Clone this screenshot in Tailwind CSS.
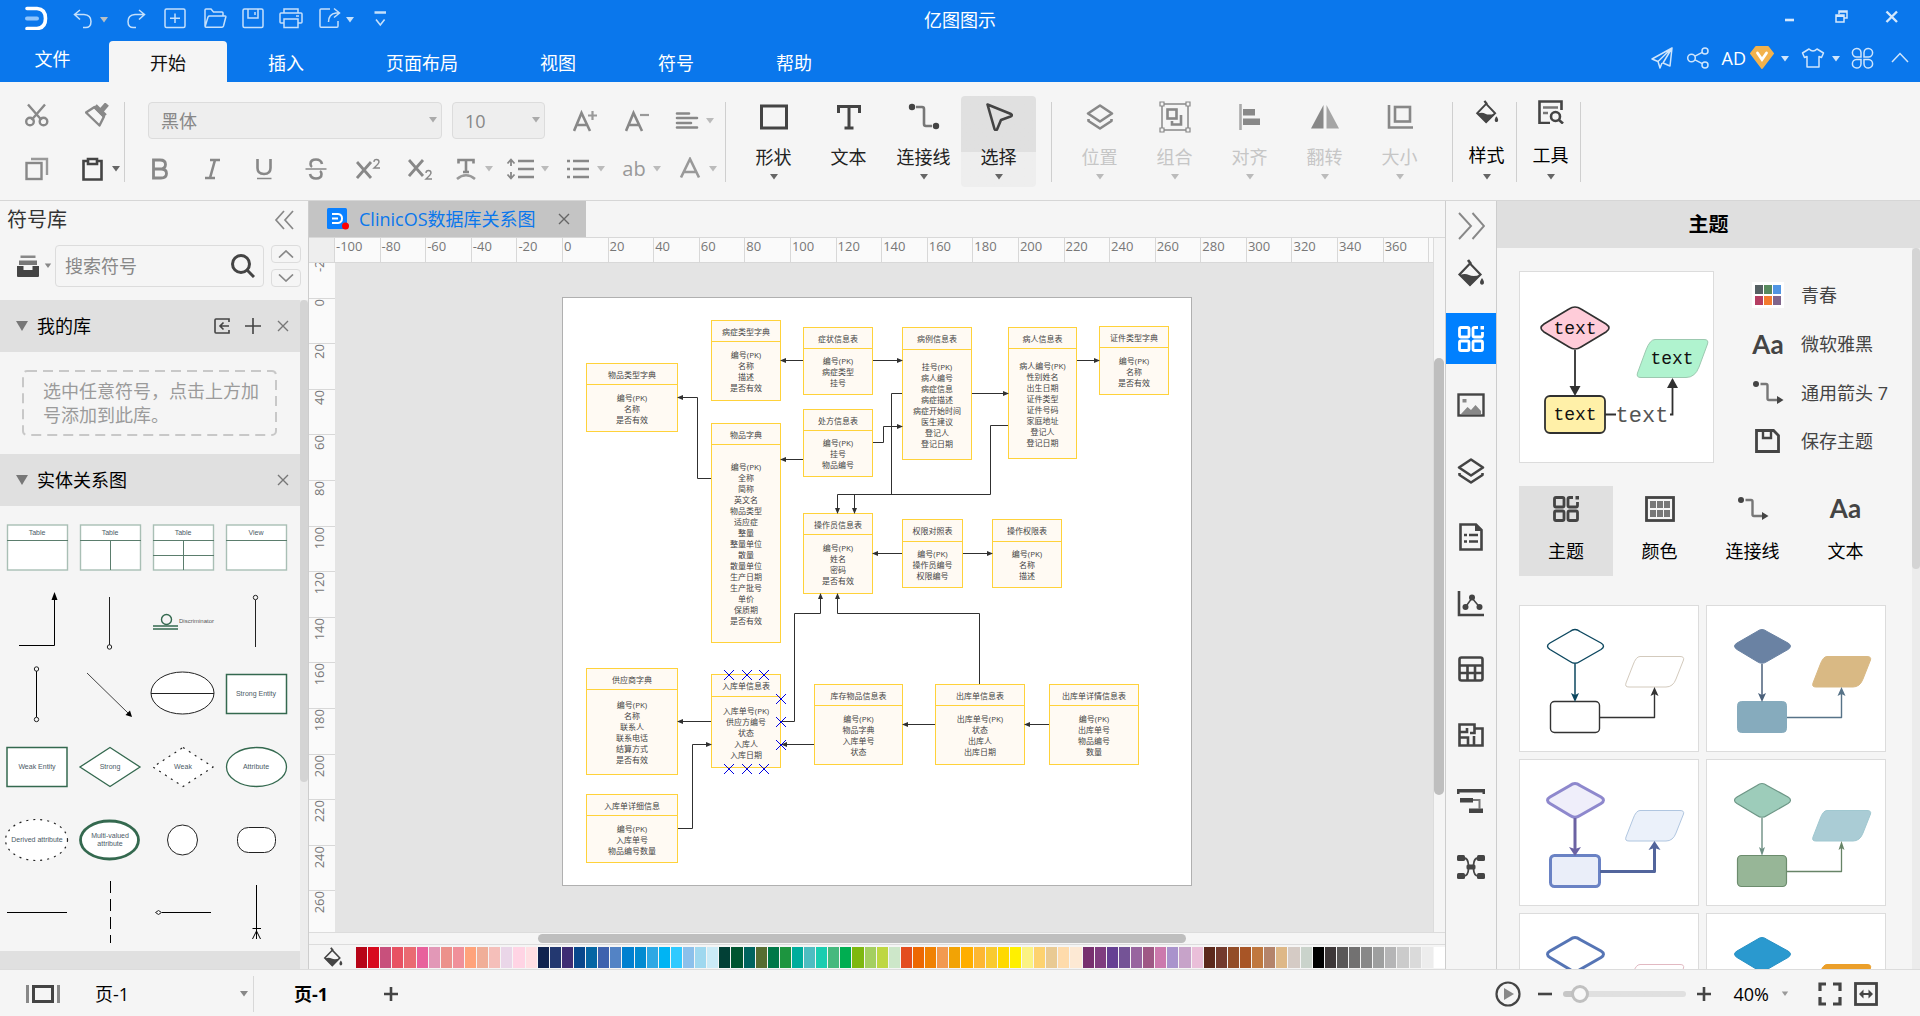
<!DOCTYPE html>
<html lang="zh-CN">
<head>
<meta charset="utf-8">
<title>亿图图示</title>
<script src="https://cdn.jsdelivr.net/npm/@tailwindcss/browser@4"></script>
</head>
<body class="h-screen flex flex-col overflow-hidden bg-[#f5f5f5] text-black text-lg leading-6 font-['Open_Sans','Noto_Sans_CJK_SC',sans-serif]">

<svg class="hidden" aria-hidden="true">
  <symbol id="caret" viewBox="0 0 10 6"><path d="M1 0H9L5 5.5Z" fill="currentColor"/></symbol>
  <symbol id="bucket" viewBox="0 0 28 28"><path d="M11 1 14 5" stroke="currentColor" stroke-width="2.6" fill="none"/><path d="M13 4.500 2.500 15.500 13 26 23.500 15.500Z" fill="none" stroke="currentColor" stroke-width="2.200"/><path d="M3 16Q8 14 12 16T23 16L13 26.500Z" fill="currentColor"/><path d="M25 19Q28 23 26.500 25Q25 26.500 23.500 25Q22 23 25 19Z" fill="currentColor"/></symbol>
  <symbol id="theme" viewBox="0 0 26 26"><g fill="none" stroke="currentColor" stroke-width="2.800"><rect x="1.500" y="1.500" width="9.500" height="9.500" rx="1.500"/><rect x="1.500" y="15" width="9.500" height="9.500" rx="1.500"/><rect x="15" y="15" width="9.500" height="9.500" rx="1.500"/><path d="M20 1.500H16.500Q15 1.500 15 3V9.500Q15 11 16.500 11H23Q24.500 11 24.500 9.500V6"/></g><rect x="22.500" y="0" width="3.500" height="3.500" fill="currentColor"/></symbol>
  <symbol id="layers" viewBox="0 0 28 28"><path d="M14 2.500 26 10.500 14 18.500 2 10.500Z" fill="none" stroke="currentColor" stroke-width="2.600" stroke-linejoin="round"/><path d="M2.500 16V18L14 25.500 25.500 18V16" fill="none" stroke="currentColor" stroke-width="2.600" stroke-linejoin="round"/></symbol>
  <symbol id="link" viewBox="0 0 32 26"><circle cx="4" cy="4" r="3" fill="currentColor"/><path d="M8.500 4H14Q15.500 4 15.500 5.500V18.500Q15.500 20 17 20H25" fill="none" stroke="#777" stroke-width="2.400"/><path d="M25 16 31.500 20 25 24Z" fill="currentColor"/></symbol>
  <symbol id="cross" viewBox="0 0 12 12"><path d="M1 1 11 11M11 1 1 11" fill="none" stroke="currentColor" stroke-width="1.400"/></symbol>
  <symbol id="plus" viewBox="0 0 16 16"><path d="M8 1V15M1 8H15" fill="none" stroke="currentColor" stroke-width="2.600"/></symbol>
</svg>

<!-- Title bar and tabs -->
<header class="bg-[#0a77ec] text-white shrink-0 h-[82px] flex flex-col relative">
  <div class="h-[41px] flex justify-between">
    <div class="flex items-start pt-[6px] pl-6 text-[#c5e0fb]">
      <svg class="w-6 h-6 mr-6" viewBox="0 0 24 24" fill="none"><path d="M3 2.500H13Q21.500 3 21.500 12.500T13 22.500H3" stroke="#fff" stroke-width="3.600" stroke-linecap="round"/><path d="M3 12.500H13" stroke="#8fc4fb" stroke-width="4" stroke-linecap="round"/></svg>
      <button class="w-6 h-6" aria-label="撤销"><svg class="w-6 h-6" viewBox="0 0 24 24" fill="none" stroke="currentColor" stroke-width="1.500"><path d="M8 4 2.500 8.500 8 13.500M3 8.500H12Q19 9 19 15.500T13 21.500H11"/></svg></button>
      <svg class="w-2.5 h-1.5 ml-[3px] mr-4 mt-[11px] text-[#b9c0c4]"><use href="#caret"/></svg>
      <button class="w-6 h-6 mr-[14px]" aria-label="重做"><svg class="w-6 h-6" viewBox="0 0 24 24" fill="none" stroke="currentColor" stroke-width="1.500"><path d="M14 4 19.500 8.500 14 13.500M19 8.500H10Q3 9 3 15.500T9 21.500H11"/></svg></button>
      <button class="w-6 h-6 mr-4" aria-label="新建"><svg class="w-6 h-6" viewBox="0 0 24 24" fill="none" stroke="currentColor" stroke-width="1.500"><rect x="2" y="3" width="20" height="18.500" rx="1.500"/><path d="M12 7.500V17M7 12.300H17"/></svg></button>
      <button class="w-6 h-6 mr-[14px]" aria-label="打开"><svg class="w-6 h-6" viewBox="0 0 24 24" fill="none" stroke="currentColor" stroke-width="1.500"><path d="M2 20V4Q2 3 3 3H8L10.500 6H19Q20 6 20 7V10M2 21 5 11Q5.500 10 6.500 10H22Q23 10 22.800 11L20.500 20Q20 21.300 19 21.300H3Q2 21.300 2 20"/></svg></button>
      <button class="w-6 h-6 mr-[14px]" aria-label="保存"><svg class="w-6 h-6" viewBox="0 0 24 24" fill="none" stroke="currentColor" stroke-width="1.500"><rect x="2" y="3" width="20" height="18.500" rx="1.500"/><path d="M7 3V12H17V3M14 6V9"/></svg></button>
      <button class="w-6 h-6 mr-[14px]" aria-label="打印"><svg class="w-6 h-6" viewBox="0 0 24 24" fill="none" stroke="currentColor" stroke-width="1.500"><path d="M5 7V3H19V7M5 17H2Q1 17 1 16V8Q1 7 2 7H22Q23 7 23 8V16Q23 17 22 17H19M5 13H19V21.500H5ZM17 10H20"/></svg></button>
      <button class="w-6 h-6" aria-label="导出"><svg class="w-6 h-6" viewBox="0 0 24 24" fill="none" stroke="currentColor" stroke-width="1.500"><path d="M13 3H4Q3 3 3 4V20Q3 21.300 4 21.300H20Q21 21.300 21 20V15M17 2.500 22.500 7 17 11.500M22 7H19Q11.500 8 11.500 16"/></svg></button>
      <svg class="w-2.5 h-1.5 ml-1 mr-[14px] mt-[11px]"><use href="#caret"/></svg>
      <button class="w-6 h-6" aria-label="更多"><svg class="w-6 h-6" viewBox="0 0 24 24" fill="none" stroke="currentColor" stroke-width="1.600"><path d="M5.500 6.500H17" stroke-width="2.500"/><path d="M7 13.500 11.300 19 15.600 13.500"/></svg></button>
    </div>
    <div class="flex items-start pt-[7px] pr-[18px] gap-[31px] text-[#d5e8fc]">
      <button class="w-5 h-5" aria-label="最小化"><svg class="w-5 h-5" viewBox="0 0 20 20"><path d="M5 13H14" stroke="currentColor" stroke-width="2.600"/></svg></button>
      <button class="w-5 h-5" aria-label="还原"><svg class="w-5 h-5" viewBox="0 0 20 20" fill="none" stroke="currentColor" stroke-width="1.500"><path d="M8 7V4H16V11H13M8 5H16M5 8H13V15H5ZM5 9.200H13"/></svg></button>
      <button class="w-5 h-5" aria-label="关闭"><svg class="w-5 h-5" viewBox="0 0 20 20" fill="none" stroke="currentColor" stroke-width="2.400"><path d="M4.500 4.500 15 15M15 4.500 4.500 15"/></svg></button>
    </div>
  </div>
  <h1 class="absolute inset-x-0 top-2 text-center pointer-events-none">亿图图示</h1>
  <div class="h-[41px] flex justify-between">
    <nav class="flex items-stretch">
      <button class="w-[109px] pr-1 pb-[6px]">文件</button>
      <button class="px-[41px] pt-[3px] bg-[#f5f5f5] text-[#111] rounded-t-sm">开始</button>
      <button class="px-[41px] pt-[3px]">插入</button>
      <button class="px-[41px] pt-[3px]">页面布局</button>
      <button class="px-[41px] pt-[3px]">视图</button>
      <button class="px-[41px] pt-[3px]">符号</button>
      <button class="px-[41px] pt-[3px]">帮助</button>
    </nav>
    <div class="flex items-start pt-[5px] pr-2 text-[#cfe5fc]">
      <button class="w-6 h-6 mr-3" aria-label="发送"><svg class="w-6 h-6" viewBox="0 0 24 24" fill="none" stroke="currentColor" stroke-width="1.500" stroke-linejoin="round"><path d="M22 2 2 13 8 15.500ZM22 2 20 20 13 17ZM8 15.500 10 22 12 17"/></svg></button>
      <button class="w-6 h-6 mr-3" aria-label="分享"><svg class="w-6 h-6" viewBox="0 0 24 24" fill="none" stroke="currentColor" stroke-width="1.500"><circle cx="5.500" cy="12" r="3.800"/><circle cx="19" cy="5" r="3"/><circle cx="19" cy="19" r="3"/><path d="M9 10.200 16.300 6.400M9 13.800 16.300 17.600"/></svg></button>
      <a href="#" class="text-white flex items-start">AD
        <svg class="w-6 h-6 ml-1" viewBox="0 0 24 24"><path d="M6 1H18L23 7.500 12 22 1 7.500Z" fill="#f3b24c" stroke="#f3b24c" stroke-width="2" stroke-linejoin="round"/><path d="M7.500 7 12 13.500 16.500 7" fill="none" stroke="#fff" stroke-width="2.800" stroke-linecap="round"/></svg></a>
      <svg class="w-2.5 h-1.5 ml-[6px] mr-[11px] mt-[10px]"><use href="#caret"/></svg>
      <button class="w-6 h-6" aria-label="外观"><svg class="w-6 h-6" viewBox="0 0 24 24" fill="none" stroke="currentColor" stroke-width="1.500" stroke-linejoin="round"><path d="M8 3Q12 7 16 3L22.500 7 20.500 11.500 18 10.500V21H6V10.500L3.500 11.500 1.500 7Z"/></svg></button>
      <svg class="w-2.5 h-1.5 ml-[6px] mr-[9px] mt-[10px]"><use href="#caret"/></svg>
      <button class="w-6 h-6 mr-[14px]" aria-label="应用"><svg class="w-6 h-6" viewBox="0 0 24 24" fill="none" stroke="currentColor" stroke-width="1.500"><path d="M11 11H6.500A4.300 4.300 0 1 1 11 6.500ZM14 11H18.500A4.300 4.300 0 1 0 14 6.500ZM11 13.500H6.500A4.300 4.300 0 1 0 11 18ZM14 13.500H18.500A4.300 4.300 0 1 1 14 18Z"/></svg></button>
      <button class="w-6 h-6" aria-label="收起"><svg class="w-6 h-6" viewBox="0 0 24 24" fill="none" stroke="currentColor" stroke-width="1.500"><path d="M4 16 12 7.500 20 16"/></svg></button>
    </div>
  </div>
</header>

<!-- Ribbon -->
<section class="shrink-0 h-[119px] border-b border-[#d6d6d6] flex text-[#888]">
  <div class="w-[124px] pt-[21px] pl-[25px] flex flex-col gap-[30px]">
    <div class="flex gap-9">
      <button class="w-6 h-6" aria-label="剪切"><svg class="w-6 h-6" viewBox="0 0 24 24" fill="none" stroke="currentColor" stroke-width="2.400"><path d="M3 1.500 16.500 17M20 1.500 6.500 17"/><circle cx="5" cy="18.500" r="3.800"/><circle cx="18.500" cy="18.500" r="3.800"/></svg></button>
      <button class="w-6 h-6" aria-label="格式刷"><svg class="w-6 h-6" viewBox="0 0 24 24" fill="none" stroke="currentColor"><path d="M1 9.500 9.500 4 19 13.500 14.500 22.500Z" stroke-width="2.400" stroke-linejoin="round"/><path d="M10 3 20 13 M16 8 22 1" stroke-width="5"/></svg></button>
    </div>
    <div class="flex items-center">
      <button class="w-6 h-6 mr-8" aria-label="复制"><svg class="w-6 h-6" viewBox="0 0 24 24" fill="none" stroke="currentColor" stroke-width="2.400"><rect x="1.500" y="6" width="15" height="16"/><path d="M6 2H22V18" stroke="#999"/></svg></button>
      <button class="w-6 h-6 text-[#444]" aria-label="粘贴"><svg class="w-6 h-6" viewBox="0 0 24 24" fill="none" stroke="currentColor" stroke-width="2.600"><path d="M7 4H2.500V22.500H20.500V4H16M7 2H16V7H7Z"/></svg></button>
      <svg class="w-2.5 h-1.5 ml-[6px] text-[#666]"><use href="#caret"/></svg>
    </div>
  </div>
  <div class="w-px h-20 mt-5 bg-[#cfcfcf]"></div>

  <div class="w-[600px] pt-5 pl-[23px] flex flex-col gap-[18px]">
    <div class="flex items-center h-[37px]">
      <div class="relative w-[294px] mr-[10px]"><select aria-label="字体" class="appearance-none w-full h-[37px] px-3 bg-[#eee] border border-[#dcdcdc] rounded-sm text-[#888]"><option>黑体</option></select><svg class="absolute right-1 top-[15px] w-2.5 h-1.5 text-[#aaa]"><use href="#caret"/></svg></div>
      <div class="relative w-[93px] mr-7"><select aria-label="字号" class="appearance-none w-full h-[37px] px-3 bg-[#eee] border border-[#dcdcdc] rounded-sm text-[#888]"><option>10</option></select><svg class="absolute right-1 top-[15px] w-2.5 h-1.5 text-[#aaa]"><use href="#caret"/></svg></div>
      <button class="w-6 h-6 mr-7" aria-label="增大字号"><svg class="w-6 h-6" viewBox="0 0 24 24" fill="none" stroke="currentColor" stroke-width="2.600"><path d="M1 22 8.500 4 17 22M4 16H14"/><path d="M15 6.500H24M19.500 2V11" stroke="#999" stroke-width="2.200"/></svg></button>
      <button class="w-6 h-6 mr-[26px]" aria-label="减小字号"><svg class="w-6 h-6" viewBox="0 0 24 24" fill="none" stroke="currentColor" stroke-width="2.600"><path d="M1 22 8.500 4 17 22M4 16H14"/><path d="M15 6H24" stroke="#999" stroke-width="2.200"/></svg></button>
      <button class="flex items-center gap-[6px]" aria-label="对齐方式"><svg class="w-6 h-6" viewBox="0 0 24 24" fill="none" stroke="currentColor" stroke-width="2.600" stroke-linecap="round"><path d="M2 4.500H14M2 9H22M2 14H16M2 18.500H22"/></svg><svg class="w-2.5 h-1.5 text-[#bbb]"><use href="#caret"/></svg></button>
    </div>
    <div class="flex items-center gap-7 h-6">
      <button class="w-6 h-6" aria-label="加粗"><svg class="w-6 h-6" viewBox="0 0 24 24" fill="none" stroke="currentColor" stroke-width="2.800"><path d="M5.500 3H12Q17.500 3 17.500 7.500T12 12H5.500ZM5.500 12H13Q18.500 12 18.500 16.500T13 21H5.500Z"/></svg></button>
      <button class="w-6 h-6" aria-label="斜体"><svg class="w-6 h-6" viewBox="0 0 24 24" fill="none" stroke="currentColor" stroke-width="2.600"><path d="M10 3H20M5 21H15M15 3 10 21"/></svg></button>
      <button class="w-6 h-6" aria-label="下划线"><svg class="w-6 h-6" viewBox="0 0 24 24" fill="none" stroke="currentColor" stroke-width="2.600"><path d="M5.500 2V11Q5.500 17 12 17T18.500 11V2"/><path d="M5 21.500H19.500" stroke-width="1.500"/></svg></button>
      <button class="w-6 h-6" aria-label="删除线"><svg class="w-6 h-6" viewBox="0 0 24 24" fill="none" stroke="currentColor" stroke-width="2.600"><path d="M18 7Q17 2.500 12 2.500Q6.500 2.500 6.500 7Q6.500 9 8 10M6 17Q7 21.500 12 21.500Q17.500 21.500 17.500 17Q17.500 15 16 14"/><path d="M1.500 12H22.500" stroke-width="1.500"/></svg></button>
      <button class="w-6 h-6" aria-label="上标"><svg class="w-6 h-6" viewBox="0 0 24 24" fill="none" stroke="currentColor" stroke-width="2.800"><path d="M1 5 15 21M15 5 1 21"/><path d="M18 5Q18 2.500 20.500 2.500T23 5Q23 6.500 18 11H24" stroke-width="1.400"/></svg></button>
      <button class="w-6 h-6" aria-label="下标"><svg class="w-6 h-6" viewBox="0 0 24 24" fill="none" stroke="currentColor" stroke-width="2.800"><path d="M1 3 15 19M15 3 1 19"/><path d="M18 16Q18 13.500 20.500 13.500T23 16Q23 17.500 18 22H24" stroke-width="1.400"/></svg></button>
      <div class="flex items-center gap-4 -ml-[6px]">
        <button class="flex items-center gap-[6px]" aria-label="文字排列"><svg class="w-6 h-6" viewBox="0 0 24 24" fill="none" stroke="currentColor" stroke-width="2.600"><path d="M4.500 6.500V3H19.500V6.500M12 3V15M9 15H15"/><path d="M3 22Q12 14.500 21 22" stroke="#999"/></svg><svg class="w-2.5 h-1.5 text-[#bbb]"><use href="#caret"/></svg></button>
        <button class="flex items-center gap-[6px]" aria-label="行距"><svg class="w-6 h-6 overflow-visible" viewBox="0 0 24 24" fill="none" stroke="currentColor" stroke-width="2.600"><path d="M8 4H24M8 12H24M8 20H24"/><path d="M1 3V9M1 15V21M-2.500 6.500 1 2.500 4.500 6.500M-2.500 17.500 1 21.500 4.500 17.500" stroke-width="1.800"/></svg><svg class="w-2.5 h-1.5 text-[#bbb]"><use href="#caret"/></svg></button>
        <button class="flex items-center gap-[6px]" aria-label="项目符号"><svg class="w-6 h-6" viewBox="0 0 24 24" fill="none" stroke="currentColor" stroke-width="2.600"><path d="M7 4H23M7 12H23M7 20H23M1 4H4M1 12H4M1 20H4"/></svg><svg class="w-2.5 h-1.5 text-[#bbb]"><use href="#caret"/></svg></button>
        <button class="flex items-center gap-[6px] text-[#999]" aria-label="大小写"><span class="w-6 text-[20px]">ab</span><svg class="w-2.5 h-1.5 text-[#bbb]"><use href="#caret"/></svg></button>
        <button class="flex items-center gap-[6px] text-[#999]" aria-label="字体颜色"><svg class="w-6 h-6" viewBox="0 0 24 24" fill="none" stroke="currentColor" stroke-width="2.600"><path d="M3 20.500 12 2 21 20.500M6 15H18"/></svg><svg class="w-2.5 h-1.5 text-[#bbb]"><use href="#caret"/></svg></button>
      </div>
    </div>
  </div>
  <div class="w-px h-20 mt-5 bg-[#cfcfcf]"></div>

  <div class="flex pt-[14px] pl-[10px] pr-[15px] text-[#444]">
    <button class="w-[75px] h-[91px] flex flex-col items-center pt-[7px]"><svg class="w-7 h-7" viewBox="0 0 28 28"><rect x="1.500" y="3" width="25" height="22" fill="none" stroke="currentColor" stroke-width="3"/></svg><span class="mt-[14px] text-[#222]">形状</span><svg class="w-2.5 h-1.5 mt-[5px] text-[#666]"><use href="#caret"/></svg></button>
    <button class="w-[75px] h-[91px] flex flex-col items-center pt-[7px]"><svg class="w-7 h-7" viewBox="0 0 28 28" fill="none" stroke="currentColor" stroke-width="3"><path d="M3.500 10V3.500H24.500V10"/><path d="M14 3V25M9.500 25H18.500"/></svg><span class="mt-[14px] text-[#222]">文本</span></button>
    <button class="w-[75px] h-[91px] flex flex-col items-center pt-[7px]"><svg class="w-7 h-7 overflow-visible" viewBox="0 0 28 28"><circle cx="2" cy="4" r="3.200" fill="currentColor"/><path d="M6 4H12Q14 4 14 6V21Q14 23 16 23H22" fill="none" stroke="#777" stroke-width="2.600"/><circle cx="26" cy="23" r="3.200" fill="currentColor"/></svg><span class="mt-[14px] text-[#222]">连接线</span><svg class="w-2.5 h-1.5 mt-[5px] text-[#666]"><use href="#caret"/></svg></button>
    <button class="w-[75px] h-[91px] flex flex-col items-center pt-[7px] rounded-sm bg-linear-to-b from-[#e0e0e0] from-[61%] to-[#eee] to-[61%]"><svg class="w-7 h-7" viewBox="0 0 28 28"><path d="M2.500 1.500 26 11Q28 12.500 25.500 13.500L16 17 12 26.500Q10.500 28 9.500 26Z" fill="none" stroke="currentColor" stroke-width="2.600" stroke-linejoin="round"/></svg><span class="mt-[14px] text-[#222]">选择</span><svg class="w-2.5 h-1.5 mt-[5px] text-[#666]"><use href="#caret"/></svg></button>
  </div>
  <div class="w-px h-20 mt-5 bg-[#cfcfcf]"></div>

  <div class="flex pt-[14px] pl-[10px] pr-[15px] text-[#888]">
    <button disabled class="w-[75px] h-[91px] flex flex-col items-center pt-[7px]"><svg class="w-7 h-7"><use href="#layers"/></svg><span class="mt-[14px] text-[#c6c6c6]">位置</span><svg class="w-2.5 h-1.5 mt-[5px] text-[#bbb]"><use href="#caret"/></svg></button>
    <button disabled class="w-[75px] h-[91px] flex flex-col items-center pt-[7px]"><svg class="w-7 h-7 overflow-visible" viewBox="0 0 28 28" fill="none" stroke="currentColor"><rect x="1" y="1" width="26" height="26" stroke-width="1.500"/><rect x="6.500" y="6.500" width="9" height="9" stroke-width="2.600"/><path d="M20 12V21.500H11V18" stroke-width="2.600"/><path d="M-1 -1H3V3H-1ZM25 -1H29V3H25ZM-1 25H3V29H-1ZM25 25H29V29H25Z" fill="#f5f5f5" stroke-width="1.200"/></svg><span class="mt-[14px] text-[#c6c6c6]">组合</span><svg class="w-2.5 h-1.5 mt-[5px] text-[#bbb]"><use href="#caret"/></svg></button>
    <button disabled class="w-[75px] h-[91px] flex flex-col items-center pt-[7px]"><svg class="w-7 h-7" viewBox="0 0 28 28"><path d="M4.500 1V27" stroke="#aaa" stroke-width="2.600"/><path d="M7 6H19V12.500H7ZM7 15.500H24V22H7Z" fill="currentColor"/></svg><span class="mt-[14px] text-[#c6c6c6]">对齐</span><svg class="w-2.5 h-1.5 mt-[5px] text-[#bbb]"><use href="#caret"/></svg></button>
    <button disabled class="w-[75px] h-[91px] flex flex-col items-center pt-[7px]"><svg class="w-7 h-7" viewBox="0 0 28 28"><path d="M0 25.500 12.500 2V25.500Z" fill="currentColor"/><path d="M28 25.500 15.500 2V25.500Z" fill="#a5a5a5"/></svg><span class="mt-[14px] text-[#c6c6c6]">翻转</span><svg class="w-2.5 h-1.5 mt-[5px] text-[#bbb]"><use href="#caret"/></svg></button>
    <button disabled class="w-[75px] h-[91px] flex flex-col items-center pt-[7px]"><svg class="w-7 h-7" viewBox="0 0 28 28" fill="none" stroke="currentColor" stroke-width="2.600"><rect x="9" y="4" width="15" height="14.500"/><path d="M3 2V24.500H27"/></svg><span class="mt-[14px] text-[#c6c6c6]">大小</span><svg class="w-2.5 h-1.5 mt-[5px] text-[#bbb]"><use href="#caret"/></svg></button>
  </div>
  <div class="w-px h-20 mt-5 bg-[#cfcfcf]"></div>
  <button class="w-[63px] flex flex-col items-center pt-[18px] pl-1 text-[#444]"><svg class="w-6 h-6"><use href="#bucket"/></svg><span class="mt-[19px] text-black">样式</span><svg class="w-2.5 h-1.5 mt-[7px] text-[#666]"><use href="#caret"/></svg></button>
  <div class="w-px h-20 mt-5 bg-[#cfcfcf]"></div>
  <button class="w-[63px] flex flex-col items-center pt-[18px] pl-1 text-[#444]"><svg class="w-7 h-6" viewBox="0 0 28 24" fill="none" stroke="currentColor" stroke-width="2.600"><path d="M13 23H2.500V1.500H24.500V10"/><path d="M6 7.500H21M6 13H11" stroke="#777" stroke-width="2.400"/><circle cx="18.500" cy="16.500" r="4.500"/><path d="M22 20 26 23.500"/></svg><span class="mt-[19px] text-black">工具</span><svg class="w-2.5 h-1.5 mt-[7px] text-[#666]"><use href="#caret"/></svg></button>
  <div class="w-px h-20 mt-5 bg-[#cfcfcf]"></div>
</section>

<div class="flex-1 min-h-0 flex">

  <!-- Symbol library -->
  <aside class="w-[309px] shrink-0 border-r border-[#cdcdcd] flex flex-col">
    <div class="flex justify-between items-center h-[38px] pl-[7px] pr-[14px] text-[#333]">
      <h2 class="text-xl leading-6">符号库</h2>
      <button aria-label="收起符号库" class="text-[#888]"><svg class="w-5 h-5" viewBox="0 0 20 20" fill="none" stroke="currentColor" stroke-width="1.700"><path d="M10 1 2 10 10 19M19 1 11 10 19 19"/></svg></button>
    </div>
    <div class="flex items-start h-[61px] pt-[6px] pl-4 shrink-0">
      <button aria-label="符号库列表" class="flex items-center h-[42px] gap-1 text-[#444]"><svg class="w-6 h-6" viewBox="0 0 24 24"><path d="M4.500 1.500H19.500V4H4.500Z" fill="#888"/><path d="M3 6.500H21V11H3Z" fill="#777"/><path d="M1 12H7.500V16H16.500V12H23V22Q23 23 22 23H2Q1 23 1 22Z" fill="currentColor"/></svg><svg class="w-2 h-1.5 text-[#888]"><use href="#caret"/></svg></button>
      <label class="ml-[3px] w-[209px] h-[42px] border border-[#dcdcdc] rounded-sm flex items-center pl-[9px] pr-2">
        <input type="text" placeholder="搜索符号" aria-label="搜索符号" class="flex-1 min-w-0 outline-none placeholder:text-[#888]">
        <svg class="w-6 h-6 text-[#444]" viewBox="0 0 24 24" fill="none" stroke="currentColor" stroke-width="3"><circle cx="10" cy="10" r="8.500"/><path d="M16 16 23 23"/></svg>
      </label>
      <div class="ml-[7px] flex flex-col gap-[6px] text-[#888]">
        <button aria-label="上一个" class="w-[30px] h-[18px] border border-[#dcdcdc] rounded-sm flex items-center justify-center"><svg class="w-4 h-2" viewBox="0 0 16 8" fill="none" stroke="currentColor" stroke-width="1.700"><path d="M1 7.500 8 1 15 7.500"/></svg></button>
        <button aria-label="下一个" class="w-[30px] h-[18px] border border-[#dcdcdc] rounded-sm flex items-center justify-center"><svg class="w-4 h-2" viewBox="0 0 16 8" fill="none" stroke="currentColor" stroke-width="1.700"><path d="M1 .5 8 7 15 .5"/></svg></button>
      </div>
    </div>
    <div class="flex-1 min-h-0 flex">
      <div class="flex-1 overflow-hidden flex flex-col">
        <div class="h-[52px] shrink-0 bg-[#e0e0e0] flex items-center pl-4 pr-[11px]">
          <svg class="w-3 h-2.5 text-[#777]" viewBox="0 0 12 10"><path d="M0 0H12L6 10Z" fill="currentColor"/></svg>
          <h3 class="ml-[9px] flex-1">我的库</h3>
          <button aria-label="导入" class="text-[#444] mr-[15px]"><svg class="w-4 h-4" viewBox="0 0 16 16" fill="none" stroke="currentColor" stroke-width="1.600"><path d="M15 4V1H2Q1 1 1 2V14Q1 15 2 15H15V12M6 8H15M9.500 4.500 6 8 9.500 11.500"/></svg></button>
          <button aria-label="添加" class="text-[#444] mr-4"><svg class="w-4 h-4" viewBox="0 0 16 16" fill="none" stroke="currentColor" stroke-width="1.600"><path d="M8 0V16M0 8H16"/></svg></button>
          <button aria-label="关闭我的库" class="text-[#777]"><svg class="w-3 h-3"><use href="#cross"/></svg></button>
        </div>
        <div class="h-[102px] shrink-0 pt-[18px] pl-[22px]">
          <p class="w-[255px] h-[66px] relative pt-[9px] pl-[21px] text-[#9b9b9b]"><svg class="absolute inset-0 w-full h-full" viewBox="0 0 255 66"><rect x="1" y="1" width="253" height="64" rx="4" fill="none" stroke="#c8c8c8" stroke-width="2" stroke-dasharray="10 6"/></svg>选中任意符号，点击上方加<br>号添加到此库。</p>
        </div>
        <div class="h-[52px] shrink-0 bg-[#e0e0e0] flex items-center pl-4 pr-[11px]">
          <svg class="w-3 h-2.5 text-[#777]" viewBox="0 0 12 10"><path d="M0 0H12L6 10Z" fill="currentColor"/></svg>
          <h3 class="ml-[9px] flex-1">实体关系图</h3>
          <button aria-label="关闭实体关系图" class="text-[#777]"><svg class="w-3 h-3"><use href="#cross"/></svg></button>
        </div>
        <div id="shapes" class="grid grid-cols-[repeat(4,73px)] auto-rows-[73px] pl-px pt-[5px] h-[445px] shrink-0"></div>
        <div class="flex-1 bg-[#e0e0e0]"></div>
      </div>
      <div class="w-2 bg-[#ececec]"><div class="w-2 h-[72%] rounded-t-full rounded-b-full bg-[#d4d4d4]"></div></div>
    </div>
  </aside>

  <!-- Document -->
  <main class="flex-1 min-w-0 flex flex-col">
    <div class="h-9 shrink-0 flex">
      <div class="w-[277px] bg-[#c4c4c4] flex items-center pl-[18px] pr-4">
        <svg class="w-[22px] h-[22px]" viewBox="0 0 22 22"><rect width="20" height="21" rx="1.500" fill="#0a80ff"/><path d="M5 6H11Q15 6.500 15 10.500T11 15H5M5 10.500H11" fill="none" stroke="#fff" stroke-width="2"/><circle cx="18.500" cy="18" r="3.500" fill="#f00"/></svg>
        <span class="ml-[10px] flex-1 text-[#0a77ec] whitespace-nowrap">ClinicOS数据库关系图</span>
        <button aria-label="关闭文档" class="text-[#666]"><svg class="w-3 h-3"><use href="#cross"/></svg></button>
      </div>
    </div>
    <div class="flex-1 min-h-0 flex border-t border-[#d8d8d8]">
      <div class="flex-1 min-w-0 flex flex-col">
        <div class="h-[25px] shrink-0 flex border-b border-[#d8d8d8] text-[13px] leading-4 text-[#777]">
          <div class="w-[26px] shrink-0 bg-[#eee] border-r border-[#d8d8d8]"></div>
          <div id="ruler-x" class="flex-1 min-w-0 overflow-hidden flex bg-[#fafafa]"></div>
        </div>
        <div class="flex-1 min-h-0 flex">
          <div id="ruler-y" class="w-[26px] shrink-0 overflow-hidden flex flex-col bg-[#fafafa] text-[13px] leading-4 text-[#777]"></div>
          <div class="flex-1 relative overflow-hidden bg-[#e4e4e4]">
            <div id="page" class="absolute left-[227px] top-[34px] w-[630px] h-[589px] bg-white border border-[#b0b0b0] text-[8px] leading-[11px] text-[#444] text-center whitespace-nowrap">
              <svg id="wires" class="absolute inset-0 w-full h-full" fill="none" stroke="#303030">
                <defs><marker id="arrow" markerWidth="6" markerHeight="6" refX="5" refY="3" orient="auto" markerUnits="userSpaceOnUse"><path d="M0 0.500 6 3 0 5.500Z" fill="#303030" stroke="none"/></marker></defs>
              </svg>
            </div>
          </div>
        </div>
      </div>
      <div class="w-3 shrink-0 border-l border-[#dcdcdc] pt-[120px]"><div class="w-2.5 h-[437px] rounded-full bg-[#bebebe]"></div></div>
    </div>
    <div class="h-[13px] shrink-0 border-y border-[#dcdcdc] pl-[229px] pt-px"><div class="w-[648px] h-[9px] rounded-full bg-[#bebebe]"></div></div>
    <div class="h-6 shrink-0 flex items-center pl-[14px]">
      <button aria-label="填充" class="text-[#444] mr-[13px]"><svg class="w-5 h-5"><use href="#bucket"/></svg></button>
      <div id="palette" class="flex-1 flex gap-px h-[21px]"></div>
    </div>
  </main>

  <!-- Tool rail -->
  <nav class="w-[52px] shrink-0 border-x border-[#cdcdcd] text-[#444] flex flex-col items-center overflow-hidden">
    <button aria-label="收起面板" class="h-[39px] shrink-0 pt-[11px] text-[#888]"><svg class="w-7 h-7" viewBox="0 0 28 28" fill="none" stroke="currentColor" stroke-width="1.900"><path d="M2 1 14 14 2 27M15.500 1 27 14 15.500 27"/></svg></button>
    <div class="flex flex-col gap-[15px] pt-[7px] w-full">
      <button aria-label="填充" class="h-[51px] w-full flex items-center justify-center"><svg class="w-7 h-7"><use href="#bucket"/></svg></button>
      <button aria-label="主题" class="h-[51px] w-full flex items-center justify-center bg-[#0080ff] text-white"><svg class="w-[26px] h-[26px]"><use href="#theme"/></svg></button>
      <button aria-label="图片" class="h-[51px] w-full flex items-center justify-center"><svg class="w-7 h-6" viewBox="0 0 28 24"><rect x="1.500" y="1.500" width="25" height="21" fill="none" stroke="currentColor" stroke-width="2.400"/><path d="M4 21 10.500 14 14 17 18.500 12 24 18V21Z" fill="#888"/><path d="M5.500 6H9.500V9.500H5.500Z" fill="#888"/></svg></button>
      <button aria-label="图层" class="h-[51px] w-full flex items-center justify-center"><svg class="w-7 h-7"><use href="#layers"/></svg></button>
      <button aria-label="页面" class="h-[51px] w-full flex items-center justify-center"><svg class="w-6 h-7" viewBox="0 0 24 28" fill="none" stroke="currentColor" stroke-width="2.600"><path d="M1.500 1.500H17L22.500 7V26.500H1.500Z"/><path d="M16 1V8H23Z" fill="currentColor" stroke="none"/><path d="M5 12H8M10 12H19M5 18.500H8M10 18.500H19"/></svg></button>
      <button aria-label="图表" class="h-[51px] w-full flex items-center justify-center"><svg class="w-7 h-7" viewBox="0 0 28 28" fill="none" stroke="currentColor"><path d="M2 2V26H27" stroke-width="2.600"/><path d="M8.500 18 15 9 22.500 18" stroke-width="1.500"/><g fill="currentColor" stroke="none"><circle cx="15" cy="8.500" r="3"/><circle cx="8.500" cy="18" r="3"/><circle cx="22.500" cy="18" r="3"/></g></svg></button>
      <button aria-label="表格" class="h-[51px] w-full flex items-center justify-center"><svg class="w-[26px] h-[26px]" viewBox="0 0 26 26" fill="none" stroke="currentColor" stroke-width="2.600"><rect x="1.500" y="1.500" width="23" height="23" rx="2"/><path d="M1 9.500H25M1 17H25M9.500 9V25M17 9V25"/></svg></button>
      <button aria-label="平面图" class="h-[51px] w-full flex items-center justify-center"><svg class="w-[26px] h-6" viewBox="0 0 26 24" fill="none" stroke="currentColor" stroke-width="2.600"><path d="M1.500 1.500H16.500V5.500H24.500V22.500H1.500ZM1 9H9V5M16.500 5V10H12M1 14.500H10V22M16 13V18M16 22V18"/></svg></button>
      <button aria-label="甘特图" class="h-[51px] w-full flex items-center justify-center"><svg class="w-7 h-6" viewBox="0 0 28 24" fill="currentColor"><path d="M0 0H28V5H25.500V3.500H2.500V5H0ZM3 9H16V13.500H3ZM12 19.500H26V24H12Z"/><path d="M16 11H22.500V20" fill="none" stroke="#777" stroke-width="2"/></svg></button>
      <button aria-label="思维导图" class="h-[51px] w-full flex items-center justify-center"><svg class="w-7 h-6" viewBox="0 0 28 24" fill="currentColor"><rect y="0" width="8" height="6" rx="1.500"/><rect y="18" width="8" height="6" rx="1.500"/><rect x="20" y="0" width="8" height="6" rx="1.500"/><rect x="20" y="18" width="8" height="6" rx="1.500"/><rect x="9.500" y="9.500" width="9" height="5" rx="1.500"/><path d="M7 3Q11 3 11.500 10M7 21Q11 21 11.500 14M21 3Q17 3 16.500 10M21 21Q17 21 16.500 14" fill="none" stroke="currentColor" stroke-width="1.800"/></svg></button>
    </div>
  </nav>

  <!-- Theme panel -->
  <aside class="w-[423px] shrink-0 flex flex-col">
    <h2 class="h-[47px] shrink-0 bg-[#dfdfdf] flex items-center justify-center text-xl leading-6 font-bold">主题</h2>
    <div class="flex-1 min-h-0 flex">
      <div class="flex-1 overflow-hidden pt-[23px] pl-[22px]">
        <div class="flex gap-[38px] h-[196px]">
          <svg class="w-[195px] h-[192px] shrink-0 bg-white border border-[#dcdcdc] font-['Liberation_Mono',monospace]" viewBox="0 0 193 190" fill="none" stroke="#303030" text-anchor="middle">
            <path d="M49 37Q55 33 61 37L86 52Q92 56 86 60L61 75Q55 79 49 75L24 60Q18 56 24 52Z" fill="#ffccd9" stroke-width="1.600"/>
            <path d="M55 78V118" stroke-width="1.800"/><path d="M49.500 114H60.500L55 124Z" fill="#303030" stroke="none"/>
            <rect x="25" y="124" width="60" height="37" rx="5" fill="#fff0a8" stroke-width="1.800"/>
            <path d="M135 67.500H184Q189 67.500 187.500 72L179 95Q175 105.500 166 105.500H121Q116 105.500 117.500 101L126 78Q130 67.500 135 67.500Z" fill="#b0f3cf" stroke="#9cc9b0"/>
            <path d="M85 142.500H96M150 142.500H152.500V116" stroke-width="1.800"/><path d="M147 116H158L152.500 106Z" fill="#303030" stroke="none"/>
            <g stroke="none" font-size="18"><text x="55" y="62" fill="#111">text</text><text x="152" y="92" fill="#111">text</text><text x="55" y="148" fill="#111">text</text><text x="122" y="150" font-size="22" fill="#555">text</text></g>
          </svg>
          <div class="flex flex-col text-[#444]">
            <button class="h-12 flex items-center gap-[17px]"><svg class="w-8 h-[26px] bg-white" viewBox="0 0 32 26"><path d="M3 3H11V12H3Z" fill="#566063"/><path d="M12 3H20V12H12Z" fill="#588a5e"/><path d="M21 3H29V12H21Z" fill="#5095e3"/><path d="M3 14H11V23H3Z" fill="#b53e63"/><path d="M12 14H20V23H12Z" fill="#f37a2e"/><path d="M21 14H29V23H21Z" fill="#80658c"/></svg>青春</button>
            <button class="h-[49px] flex items-center gap-[17px]"><span class="w-8 text-[26px] font-bold font-['Lato',sans-serif]">Aa</span>微软雅黑</button>
            <button class="h-[49px] flex items-center gap-[17px]"><svg class="w-8 h-[26px]"><use href="#link"/></svg>通用箭头 7</button>
            <button class="h-12 flex items-center gap-[17px]"><svg class="w-8 h-6" viewBox="0 0 32 24" fill="none" stroke="currentColor" stroke-width="2.800"><path d="M4.500 1.500H21.500L26.500 6.500V22.500H4.500Z"/><path d="M11 2V9H19V2" stroke-width="2.400"/></svg>保存主题</button>
          </div>
        </div>
        <div class="mt-[19px] flex text-[#444]">
          <button class="w-[94px] h-[90px] flex flex-col items-center pt-[10px] gap-[17px] bg-[#e0e0e0]"><svg class="w-[26px] h-[26px]"><use href="#theme"/></svg><span class="text-black">主题</span></button>
          <button class="w-[93px] h-[90px] flex flex-col items-center pt-[10px] gap-[17px]"><svg class="w-[30px] h-[26px]" viewBox="0 0 30 26"><rect x="1.500" y="1.500" width="27" height="23" fill="none" stroke="currentColor" stroke-width="2.800"/><path d="M5 5H11V12H5ZM12 5H18V12H12ZM19 5H25V12H19ZM5 14H11V21H5ZM12 14H18V21H12ZM19 14H25V21H19Z" fill="#777"/></svg><span class="text-black">颜色</span></button>
          <button class="w-[93px] h-[90px] flex flex-col items-center pt-[10px] gap-[17px]"><svg class="w-8 h-[26px]"><use href="#link"/></svg><span class="text-black">连接线</span></button>
          <button class="w-[93px] h-[90px] flex flex-col items-center pt-[10px] gap-[17px]"><span class="h-[26px] text-[26px] font-bold font-['Lato',sans-serif]">Aa</span><span class="text-black">文本</span></button>
        </div>
        <div id="themes" class="mt-[29px] grid grid-cols-[repeat(2,180px)] gap-[7px]"></div>
      </div>
      <div class="w-2 bg-[#ececec]"><div class="w-2 h-[321px] rounded-full bg-[#d4d4d4]"></div></div>
    </div>
  </aside>
</div>

<!-- Status bar -->
<footer class="h-[47px] shrink-0 border-t border-[#dcdcdc] pt-[2px] flex items-center text-[#444]">
  <button aria-label="页面列表" class="ml-[26px]"><svg class="w-[34px] h-[18px]" viewBox="0 0 34 18"><path d="M1.500 0V18M32.500 0V18" stroke="#888" stroke-width="3"/><rect x="7.500" y="1.500" width="19" height="15" fill="none" stroke="currentColor" stroke-width="3"/></svg></button>
  <div class="relative ml-[35px] w-[159px] border-r border-[#d8d8d8] h-9 flex items-center"><select aria-label="当前页" class="appearance-none w-full text-black"><option>页-1</option></select><svg class="absolute right-1 top-[15px] w-2.5 h-1.5 text-[#888]"><use href="#caret"/></svg></div>
  <button class="ml-10 font-bold text-black">页-1</button>
  <button aria-label="添加页" class="ml-[55px]"><svg class="w-4 h-4"><use href="#plus"/></svg></button>
  <div class="flex-1"></div>
  <button aria-label="播放"><svg class="w-[26px] h-[26px]" viewBox="0 0 26 26"><circle cx="13" cy="13" r="11.500" fill="none" stroke="currentColor" stroke-width="2.200"/><path d="M9 7 19 13 9 19Z" fill="#888"/></svg></button>
  <button aria-label="缩小" class="ml-4"><svg class="w-4 h-4" viewBox="0 0 16 16"><path d="M1 8H15" stroke="currentColor" stroke-width="2.600"/></svg></button>
  <input type="range" min="0" max="100" value="8" aria-label="缩放" class="ml-[10px] w-[123px] h-[6px] rounded-full appearance-none bg-linear-to-r from-[#c6c6c6] from-[12%] to-[#e0e0e0] to-[12%] [&::-webkit-slider-thumb]:appearance-none [&::-webkit-slider-thumb]:w-[18px] [&::-webkit-slider-thumb]:h-[18px] [&::-webkit-slider-thumb]:rounded-full [&::-webkit-slider-thumb]:bg-[#f8f8f8] [&::-webkit-slider-thumb]:border-[3px] [&::-webkit-slider-thumb]:border-[#c0c0c0]">
  <button aria-label="放大" class="ml-[10px]"><svg class="w-4 h-4"><use href="#plus"/></svg></button>
  <button class="ml-[22px] flex items-center text-black">40%<svg class="w-2 h-1.5 ml-3 text-[#999]"><use href="#caret"/></svg></button>
  <button aria-label="全屏" class="ml-[29px]"><svg class="w-6 h-6" viewBox="0 0 24 24" fill="none" stroke="currentColor" stroke-width="3.200"><path d="M2 9V2H8M15 2H22V9M22 15V22H15M8 22H2V15"/></svg></button>
  <button aria-label="适应宽度" class="ml-3 mr-[42px]"><svg class="w-6 h-6" viewBox="0 0 24 24" fill="none" stroke="currentColor" stroke-width="2.800"><rect x="1.500" y="1.500" width="21" height="21"/><path d="M6 12H18" stroke-width="2"/><path d="M9.500 7.500 5 12 9.500 16.500ZM14.500 7.500 19 12 14.500 16.500Z" fill="currentColor" stroke="none"/></svg></button>
</footer>

<script>
const $ = id => document.getElementById(id);

const STEP = 45.6;
for (let v = -100; v <= 380; v += 20)
  $('ruler-x').insertAdjacentHTML('beforeend', `<div class="shrink-0 border-l border-[#d8d8d8] pl-px" style="width:${STEP}px${v === -100 ? ';margin-left:-1px' : ''}">${v < 380 ? v : ''}</div>`);
for (let v = -20; v <= 260; v += 20)
  $('ruler-y').insertAdjacentHTML('beforeend', `<div class="shrink-0 border-t border-[#d8d8d8] pl-[2px]" style="height:${STEP}px${v === -20 ? ';margin-top:-11px' : ''}"><span class="block w-4 [writing-mode:vertical-rl] rotate-180 text-right">${v}</span></div>`);

/* Entities: x, y, width, height, header height, title, fields */
const entities = [
  [148, 22, 70, 81, 21, '病症类型字典', '编号(PK) 名称 描述 是否有效'],
  [240, 29, 70, 68, 21, '症状信息表', '编号(PK) 病症类型 挂号'],
  [23, 65, 92, 69, 21, '物品类型字典', '编号(PK) 名称 是否有效'],
  [148, 125, 70, 220, 21, '物品字典', '编号(PK) 全称 简称 英文名 物品类型 适应症 整量 整量单位 散量 散量单位 生产日期 生产批号 单价 保质期 是否有效'],
  [240, 111, 70, 68, 21, '处方信息表', '编号(PK) 挂号 物品编号'],
  [339, 29, 70, 133, 22, '病例信息表', '挂号(PK) 病人编号 病症信息 病症描述 病症开始时间 医生建议 登记人 登记日期'],
  [445, 29, 69, 132, 21, '病人信息表', '病人编号(PK) 性别姓名 出生日期 证件类型 证件号码 家庭地址 登记人 登记日期'],
  [536, 28, 70, 69, 21, '证件类型字典', '编号(PK) 名称 是否有效'],
  [240, 215, 70, 81, 21, '操作员信息表', '编号(PK) 姓名 密码 是否有效'],
  [339, 221, 61, 69, 22, '权限对照表', '编号(PK) 操作员编号 权限编号'],
  [429, 221, 70, 69, 22, '操作权限表', '编号(PK) 名称 描述'],
  [23, 370, 92, 107, 21, '供应商字典', '编号(PK) 名称 联系人 联系电话 结算方式 是否有效'],
  [148, 376, 70, 94, 22, '入库单信息表', '入库单号(PK) 供应方编号 状态 入库人 入库日期'],
  [251, 386, 89, 81, 21, '库存物品信息表', '编号(PK) 物品字典 入库单号 状态'],
  [372, 386, 90, 81, 21, '出库单信息表', '出库单号(PK) 状态 出库人 出库日期'],
  [486, 386, 90, 81, 21, '出库单详情信息表', '编号(PK) 出库单号 物品编号 数量'],
  [23, 496, 92, 69, 21, '入库单详细信息', '编号(PK) 入库单号 物品编号数量'],
];
for (const [x, y, w, h, head, title, fields] of entities)
  $('wires').insertAdjacentHTML('beforebegin', `<div class="absolute flex flex-col border border-[#ffd23a] bg-[#fffaf3]" style="left:${x}px;top:${y}px;width:${w}px;height:${h}px"><div class="shrink-0 flex items-center justify-center border-b border-[#ffd23a]" style="height:${head}px">${title}</div><div class="flex-1 flex flex-col justify-center items-center">${fields.split(' ').map(f => `<div>${f}</div>`).join('')}</div></div>`);

const wires = ['M240 62.5H218', 'M310 62.5H339', 'M148 180.5H134.5V99.5H115', 'M310 144.5H320.5V128.5H339', 'M240 161.5H218',
  'M445 127.5H427.5V196.5H274.5V215', 'M339 95.5H328.5V196.5H291.5V215', 'M409 95.5H445', 'M514 62.5H536', 'M339 255.5H310', 'M400 255.5H429',
  'M218 423.5H231.5V315.5H257.5V296', 'M416.5 386V315.5H274.5V296', 'M148 423.5H115', 'M115 530.5H129.5V446.5H148',
  'M251 446.5H219', 'M372 426.5H340', 'M486 426.5H462'];
const handles = [[166, 377], [184, 377], [201, 377], [218, 401], [218, 424], [218, 447], [166, 471], [184, 471], [201, 471]];
$('wires').insertAdjacentHTML('beforeend',
  wires.map(d => `<path d="${d}" marker-end="url(#arrow)"/>`).join('') +
  handles.map(([x, y]) => `<path d="M${x - 5} ${y - 5}l10 10m0-10l-10 10" stroke="#0000e0"/>`).join(''));

/* Colour palette */
const colours = 'b70417 d80a1e c8507c e85263 ea6b72 e8619c e298b7 ec918b f0909a ffa37b f0ae98 f5bfba ead6e8 ffd4e4 ffdfe3 10234f 233870 3e2d74 08478c 0566a4 3e62ae 5383c5 0080d0 028bd1 2ea8e4 00b4f3 30caff 8cc0eb 9fd8ef cbebf7 024036 005530 00645f 566d31 007848 1d953f 00ad9c 4ebdc1 1acdb0 46b97e 00ae51 7eb810 a4cf60 bed742 cde7c9 e34d20 ed6802 f08203 f29a50 f2a305 ffae00 fdb733 f9ca30 ffd900 fff000 fbf283 fdd26f e9ca93 fedbab fde9d4 78306f 803d7f 664093 745396 98659f 9f5885 cc79ad a993cc c7a3c9 eabfd9 5c281b 733a2d 934d28 a85526 c0783f b4846b deb887 d5cbc5 cad3cb 000000 3d3738 595757 727171 888888 9e9f9f b5b5b6 cbcbcb dadada ededed ffffff';
$('palette').innerHTML = colours.split(' ').map(c => `<button class="flex-1" aria-label="#${c}" style="background:#${c}"></button>`).join('');

/* Entity-relationship symbols, each in a 73 x 73 cell */
const G = '#34694f', L = '#a9bfb5', K = '#222';
const label = (t, y = 39) => `<text x="36" y="${y}" font-size="7" text-anchor="middle" fill="#4b5a66">${t}</text>`;
const table = (t, extra) => `<rect x="6.500" y="14" width="60" height="45" fill="#fff" stroke="${L}" stroke-width="1.400"/><path d="M6 29.500H67${extra}" stroke="#5b7d6d" fill="none"/>${label(t, 24)}`;
const shapes = [
  table('Table', ''), table('Table', 'M36.500 29V59'), table('Table', 'M36.500 29V59M6 44.500H67'), table('View', ''),
  `<path d="M18 61.500H53.500V14" stroke="#000" fill="none"/><path d="M50.500 16 53.500 8 56.500 16Z"/>`,
  `<path d="M35.500 13V61" stroke="${K}"/><circle cx="35.500" cy="63" r="2.200" fill="none" stroke="${K}"/>`,
  `<g fill="none" stroke="${G}" stroke-width="1.400"><circle cx="19.500" cy="35.500" r="5"/><path d="M6 42H31M6 45H31"/></g><text x="32" y="39" font-size="6" fill="#555">Discriminator</text>`,
  `<path d="M35.500 16V63" stroke="${K}"/><circle cx="35.500" cy="13.500" r="2.200" fill="none" stroke="${K}"/>`,
  `<path d="M35.500 14V60" stroke="#000"/><g fill="none" stroke="${K}"><circle cx="35.500" cy="12" r="2.200"/><circle cx="35.500" cy="62.500" r="2.200"/></g>`,
  `<path d="M13 16 54 56" stroke="#444"/><path d="M58 60 51.500 58 56 53.500Z"/>`,
  `<ellipse cx="35.500" cy="36" rx="31.500" ry="21" fill="#fff" stroke="${K}"/><path d="M4 36.500H67" stroke="${K}"/>`,
  `<rect x="6.500" y="17.500" width="60" height="39" fill="#fff" stroke="${G}" stroke-width="1.500"/>${label('Strong Entity')}`,
  `<rect x="6" y="17.500" width="60" height="39" fill="#fff" stroke="${G}" stroke-width="1.500"/>${label('Weak Entity')}`,
  `<path d="M36 17.500 66 37 36 56.500 6 37Z" fill="#fff" stroke="${G}" stroke-width="1.300"/>${label('Strong')}`,
  `<path d="M36 17.500 66 37 36 56.500 6 37Z" fill="#fff" stroke="${K}" stroke-width="1.200" stroke-dasharray="2 5"/>${label('Weak')}`,
  `<ellipse cx="36.500" cy="37" rx="30" ry="19.500" fill="#fff" stroke="${G}" stroke-width="1.300"/>${label('Attribute')}`,
  `<ellipse cx="35.500" cy="37" rx="31" ry="20.500" fill="#fff" stroke="${K}" stroke-width="1.200" stroke-dasharray="2 5"/>${label('Derived attribute')}`,
  `<ellipse cx="35.500" cy="37" rx="29" ry="19" fill="#fff" stroke="${G}" stroke-width="2.800"/>${label('Multi-valued', 35)}${label('attribute', 43)}`,
  `<circle cx="35.500" cy="37" r="15" fill="#fff" stroke="${K}"/>`,
  `<rect x="17.500" y="24.500" width="38" height="25" rx="11" fill="#fff" stroke="${K}"/>`,
  `<path d="M6 36.500H66" stroke="#000"/>`,
  `<path d="M36.500 5V67" stroke="#000" stroke-dasharray="12 6"/>`,
  `<path d="M15 36.500H64" stroke="#000"/><path d="M8.500 36.500 11.500 34.500 14.500 36.500 11.500 38.500Z" fill="none" stroke="${K}"/>`,
  `<path d="M36.500 9V63M32.500 52.500H41M36.500 55 32.500 63M36.500 55 40.500 63" stroke="#000" fill="none"/>`,
];
$('shapes').innerHTML = shapes.map(s => `<svg class="w-[73px] h-[73px] font-['Liberation_Sans',sans-serif]" viewBox="0 0 73 73">${s}</svg>`).join('');

/* Theme cards: [fill, stroke, stroke width] of diamond, box and parallelogram; [colour, width] of both arrows */
const themes = [
  { d: ['#fff', '#0c475f', 1.4], r: ['#fff', '#333', 1.4], p: ['#fff', '#d3cabd', 1], a: ['#0c475f', 1.5], b: ['#333', 1.4], w: 4 },
  { d: ['#6a82a3', '#6a82a3', 1], r: ['#86abbd', '#86abbd', 1], p: ['#d9b984', '#d9b984', 1], a: ['#4b617b', 1.5], b: ['#577388', 1.4], w: 4 },
  { d: ['#efeefa', '#8e88cd', 3], r: ['#eaeef9', '#6a82c4', 3], p: ['#ebf1fa', '#b0c6e0', 1], a: ['#6b62a3', 3], b: ['#52659c', 3], w: 6 },
  { d: ['#9dccba', '#6d9686', 1.2], r: ['#97b697', '#6c8c6d', 1.2], p: ['#aaccd5', '#a0c8d0', 1], a: ['#6d8f83', 1.4], b: ['#678467', 1.3], w: 3 },
  { d: ['#fff', '#5675b5', 3], r: ['#fff', '#5675b5', 3], p: ['#fff', '#e2b9c2', 1], a: ['#5675b5', 2], b: ['#5675b5', 2], w: 4 },
  { d: ['#2a99cf', '#2890c4', 1], r: ['#2a99cf', '#2890c4', 1], p: ['#eb9f2a', '#eb9f2a', 1], a: ['#2a99cf', 2], b: ['#eb9f2a', 2], w: 4 },
];
const paint = ([f, s, w]) => `fill="${f}" stroke="${s}" stroke-width="${w}"`;
$('themes').innerHTML = themes.map(t => `<button class="h-[147px] bg-white border border-[#dcdcdc]"><svg class="w-full h-full" viewBox="0 0 178 145" fill="none">
  <path d="M50 25.500Q55 21.500 60 25.500L81 37Q86 40 81 43.500L60 55.500Q55 59 50 55.500L30 43.500Q25 40 30 37Z" ${paint(t.d)}/>
  <rect x="30.500" y="95.500" width="49" height="31" rx="4" ${paint(t.r)}/>
  <path d="M120 50.500H160Q164.500 50.500 163.500 54L156 73Q153 81 146 81H109Q104.500 81 106 77L113 59Q116 50.500 120 50.500Z" ${paint(t.p)}/>
  <path d="M55 58V90" stroke="${t.a[0]}" stroke-width="${t.a[1]}"/><path d="M${55 - t.w} 87L55 89L${55 + t.w} 87L55 96Z" fill="${t.a[0]}"/>
  <path d="M80 111.500H134.500V87" stroke="${t.b[0]}" stroke-width="${t.b[1]}" stroke-linejoin="round"/><path d="M${134.5 - t.w} 90L134.500 88L${134.5 + t.w} 90L134.500 81Z" fill="${t.b[0]}"/>
</svg></button>`).join('');
</script>
</body>
</html>
